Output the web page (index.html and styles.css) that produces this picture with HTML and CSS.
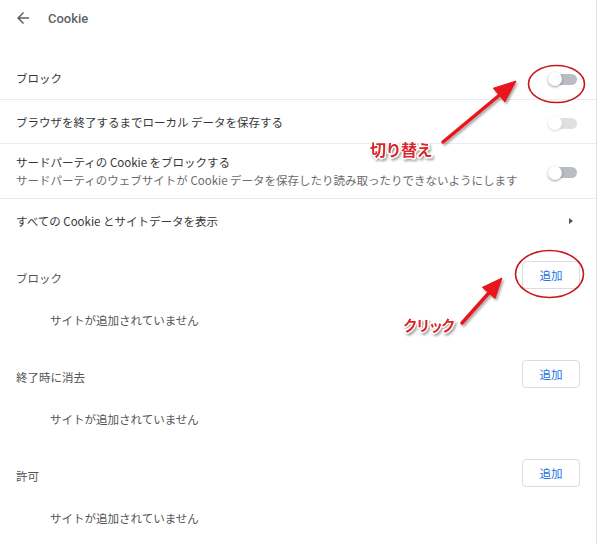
FILE: index.html
```html
<!DOCTYPE html>
<html lang="ja">
<head>
<meta charset="utf-8">
<title>Cookie</title>
<link rel="stylesheet" href="styles.css">
</head>
<body>
<div class="page">
  <header class="topbar">
    <svg class="back" viewBox="0 0 24 24" width="18" height="18" aria-hidden="true"><path d="M20 11H7.830l5.59-5.59L12 4l-8 8 8 8 1.41-1.41L7.83 13H20v-2z" fill="#5f6368"/></svg>
    <span class="title">Cookie</span>
  </header>

  <div class="list">
    <div class="row sep">
      <span class="label">ブロック</span>
      <span class="toggle"><span class="track"></span><span class="knob"></span></span>
    </div>
    <div class="row sep">
      <span class="label">ブラウザを終了するまでローカル データを保存する</span>
      <span class="toggle disabled"><span class="track"></span><span class="knob"></span></span>
    </div>
    <div class="row sep tall">
      <div class="two">
        <span class="label">サードパーティの Cookie をブロックする</span>
        <span class="sub">サードパーティのウェブサイトが Cookie データを保存したり読み取ったりできないようにします</span>
      </div>
      <span class="toggle"><span class="track"></span><span class="knob"></span></span>
    </div>
    <div class="row">
      <span class="label">すべての Cookie とサイトデータを表示</span>
      <span class="chev"></span>
    </div>
  </div>

  <section class="section">
    <div class="sec-head"><span class="sec-title">ブロック</span><button class="add">追加</button></div>
    <div class="empty">サイトが追加されていません</div>
  </section>
  <section class="section">
    <div class="sec-head"><span class="sec-title">終了時に消去</span><button class="add">追加</button></div>
    <div class="empty">サイトが追加されていません</div>
  </section>
  <section class="section">
    <div class="sec-head"><span class="sec-title">許可</span><button class="add">追加</button></div>
    <div class="empty">サイトが追加されていません</div>
  </section>
</div>

<svg class="notes" viewBox="0 0 600 544" width="600" height="544">
  <defs>
    <filter id="sh" x="-20%" y="-20%" width="140%" height="140%">
      <feDropShadow dx="1.5" dy="2" stdDeviation="1.2" flood-color="#000" flood-opacity="0.35"/>
    </filter>
  </defs>
  <ellipse cx="556.5" cy="84" rx="28" ry="18.5" fill="none" stroke="#c8161d" stroke-width="1.6"/>
  <ellipse cx="549.5" cy="274" rx="34" ry="23.5" fill="none" stroke="#c8161d" stroke-width="1.6"/>
  <g filter="url(#sh)" fill="#e8191b" stroke="#e8191b">
    <line x1="443" y1="142" x2="502" y2="93" stroke-width="3.5" stroke-linecap="round"/>
    <polygon points="516,81 504.9,102 493.3,88.2" stroke-width="1" stroke-linejoin="round"/>
    <line x1="462" y1="323" x2="491" y2="290.5" stroke-width="3.5" stroke-linecap="round"/>
    <polygon points="502,278 495,298.5 482.4,287.3" stroke-width="1" stroke-linejoin="round"/>
  </g>
  <g class="note-text" filter="url(#sh)">
    <text x="370" y="156" font-size="16" letter-spacing="-0.5">切り替え</text>
    <text class="click" x="403" y="331" font-size="14.5" letter-spacing="-1.8">クリック</text>
  </g>
</svg>
</body>
</html>
```

FILE: styles.css
```css
html, body {
  margin: 0;
  padding: 0;
  background: #fff;
}
body {
  width: 600px;
  height: 544px;
  overflow: hidden;
  position: relative;
  font-family: "Noto Sans CJK JP", sans-serif;
  font-size: 11.5px;
  color: #383838;
}
.page {
  width: 597px;
  height: 544px;
  border-right: 1px solid #dedede;
  box-sizing: border-box;
}
.topbar {
  height: 36px;
  display: flex;
  align-items: center;
  padding-left: 14px;
}
.back {
  display: block;
}
.title {
  margin-left: 16px;
  font-family: Roboto, "Noto Sans CJK JP", sans-serif;
  font-size: 13px;
  font-weight: 500;
  color: #5f6368;
}
.list {
  margin-top: 20px;
}
.row {
  display: flex;
  align-items: center;
  justify-content: space-between;
  min-height: 44px;
  padding: 0 19px 0 16px;
  box-sizing: border-box;
}
.row.sep {
  border-bottom: 1px solid #ebebeb;
}
.row.tall {
  padding-top: 9px;
  padding-bottom: 9px;
}
.label {
  line-height: 18px;
  color: #383838;
}
.two {
  display: flex;
  flex-direction: column;
}
.sub {
  line-height: 18px;
  color: #6b6b6b;
}
.toggle {
  position: relative;
  width: 29px;
  height: 14px;
  flex: none;
  margin-top: 3px;
}
.track {
  position: absolute;
  left: 5px;
  top: 1.5px;
  width: 24px;
  height: 11px;
  border-radius: 6px;
  background: #b9bcc1;
}
.knob {
  position: absolute;
  left: 0;
  top: 0;
  width: 14px;
  height: 14px;
  border-radius: 50%;
  background: #fff;
  box-shadow: 0 1px 2.5px rgba(0, 0, 0, 0.38);
}
.toggle.disabled {
  opacity: 0.45;
}
.chev {
  width: 0;
  height: 0;
  border-left: 4px solid #555;
  border-top: 3.5px solid transparent;
  border-bottom: 3.5px solid transparent;
  margin-right: 4px;
}
.section {
  margin-top: 10px;
}
.sec-head {
  height: 44px;
  display: flex;
  align-items: center;
  justify-content: space-between;
  padding: 0 16px;
}
.sec-title {
  color: #555;
  line-height: 18px;
  margin-top: 5px;
}
.add {
  width: 58px;
  height: 28px;
  border: 1px solid #dadce0;
  border-radius: 4px;
  background: #fff;
  color: #1a73e8;
  font-family: "Noto Sans CJK JP", sans-serif;
  font-size: 11.5px;
  padding: 0;
}
.empty {
  height: 45px;
  display: flex;
  align-items: center;
  padding-left: 50px;
  color: #555;
}
.notes {
  position: absolute;
  left: 0;
  top: 0;
  pointer-events: none;
}
.note-text text {
  font-family: "Noto Sans CJK JP", sans-serif;
  font-weight: 700;
  fill: #d8262b;
  stroke: #fff;
  stroke-width: 2.5px;
  paint-order: stroke;
  stroke-linejoin: round;
}
```
